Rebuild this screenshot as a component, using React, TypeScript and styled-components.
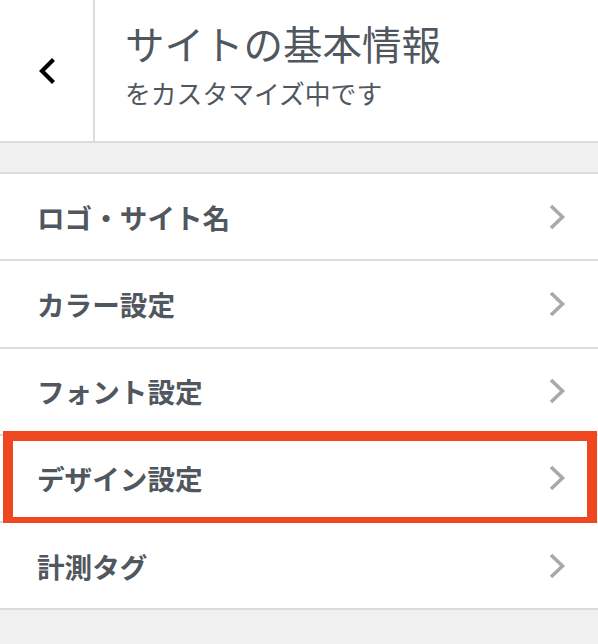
import React from 'react';
import styled, { createGlobalStyle } from 'styled-components';

const GlobalStyle = createGlobalStyle`
    html, body {
        margin: 0;
        padding: 0;
        background-color: #f0f0f1;
    }
    body {
        font-family: 'Noto Sans CJK JP', 'Noto Sans', sans-serif;
        color: #50575e;
    }
`;

const Panel = styled.div`
    width: 598px;
    min-height: 644px;
    background-color: #f0f0f1;
`;

const Header = styled.header`
    display: flex;
    height: 141px;
    background-color: #fff;
    border-bottom: 2px solid #dcdcde;
`;

const BackButton = styled.button`
    width: 95px;
    flex-shrink: 0;
    display: flex;
    align-items: center;
    justify-content: center;
    padding: 0 2px 0 0;
    background: none;
    border: none;
    border-right: 2px solid #dcdcde;
    cursor: pointer;
`;

const TitleBlock = styled.div`
    display: flex;
    flex-direction: column;
    padding: 19px 0 0 30px;
`;

const Title = styled.h1`
    margin: 0;
    font-size: 39.5px;
    line-height: 48px;
    font-weight: 400;
    color: #50575e;
`;

const Subtitle = styled.span`
    margin-top: 10px;
    font-size: 25.8px;
    line-height: 32px;
    color: #50575e;
`;

const Band = styled.div`
    height: 29px;
`;

const List = styled.ul`
    margin: 0;
    padding: 0;
    list-style: none;
    border-top: 2px solid #dcdcde;
`;

const Row = styled.li<{ $highlighted?: boolean }>`
    position: relative;
    box-sizing: border-box;
    height: 87.25px;
    display: flex;
    align-items: center;
    justify-content: space-between;
    padding: 0 31px 0 37px;
    background-color: #fff;
    border-bottom: 2px solid #dcdcde;
    font-size: 27.6px;
    font-weight: 700;
    color: #50575e;
    cursor: pointer;

    ${(props) =>
        props.$highlighted &&
        `
        &::after {
            content: '';
            position: absolute;
            top: -4.5px;
            left: 3px;
            right: 1px;
            height: 96px;
            box-sizing: border-box;
            border: 10px solid #ef4721;
            pointer-events: none;
        }
    `}
`;

const BackIcon = () => (
    <svg width="22" height="30" viewBox="0 0 22 30">
        <path d="M17 5 L7 15 L17 25" fill="none" stroke="#000" strokeWidth="4.2" strokeLinecap="square" />
    </svg>
);

const ChevronIcon = () => (
    <svg width="20" height="30" viewBox="0 0 20 30">
        <path d="M4 4 L15.5 15 L4 26" fill="none" stroke="#a7aaad" strokeWidth="3.6" />
    </svg>
);

const sections = [
    { label: 'ロゴ・サイト名' },
    { label: 'カラー設定' },
    { label: 'フォント設定' },
    { label: 'デザイン設定', highlighted: true },
    { label: '計測タグ' },
];

const App: React.FC = () => {
    return (
        <>
            <GlobalStyle />
            <Panel>
                <Header>
                    <BackButton aria-label="戻る">
                        <BackIcon />
                    </BackButton>
                    <TitleBlock>
                        <Title>サイトの基本情報</Title>
                        <Subtitle>をカスタマイズ中です</Subtitle>
                    </TitleBlock>
                </Header>
                <Band />
                <List>
                    {sections.map((s) => (
                        <Row key={s.label} $highlighted={s.highlighted}>
                            <span>{s.label}</span>
                            <ChevronIcon />
                        </Row>
                    ))}
                </List>
            </Panel>
        </>
    );
};

export default App;
